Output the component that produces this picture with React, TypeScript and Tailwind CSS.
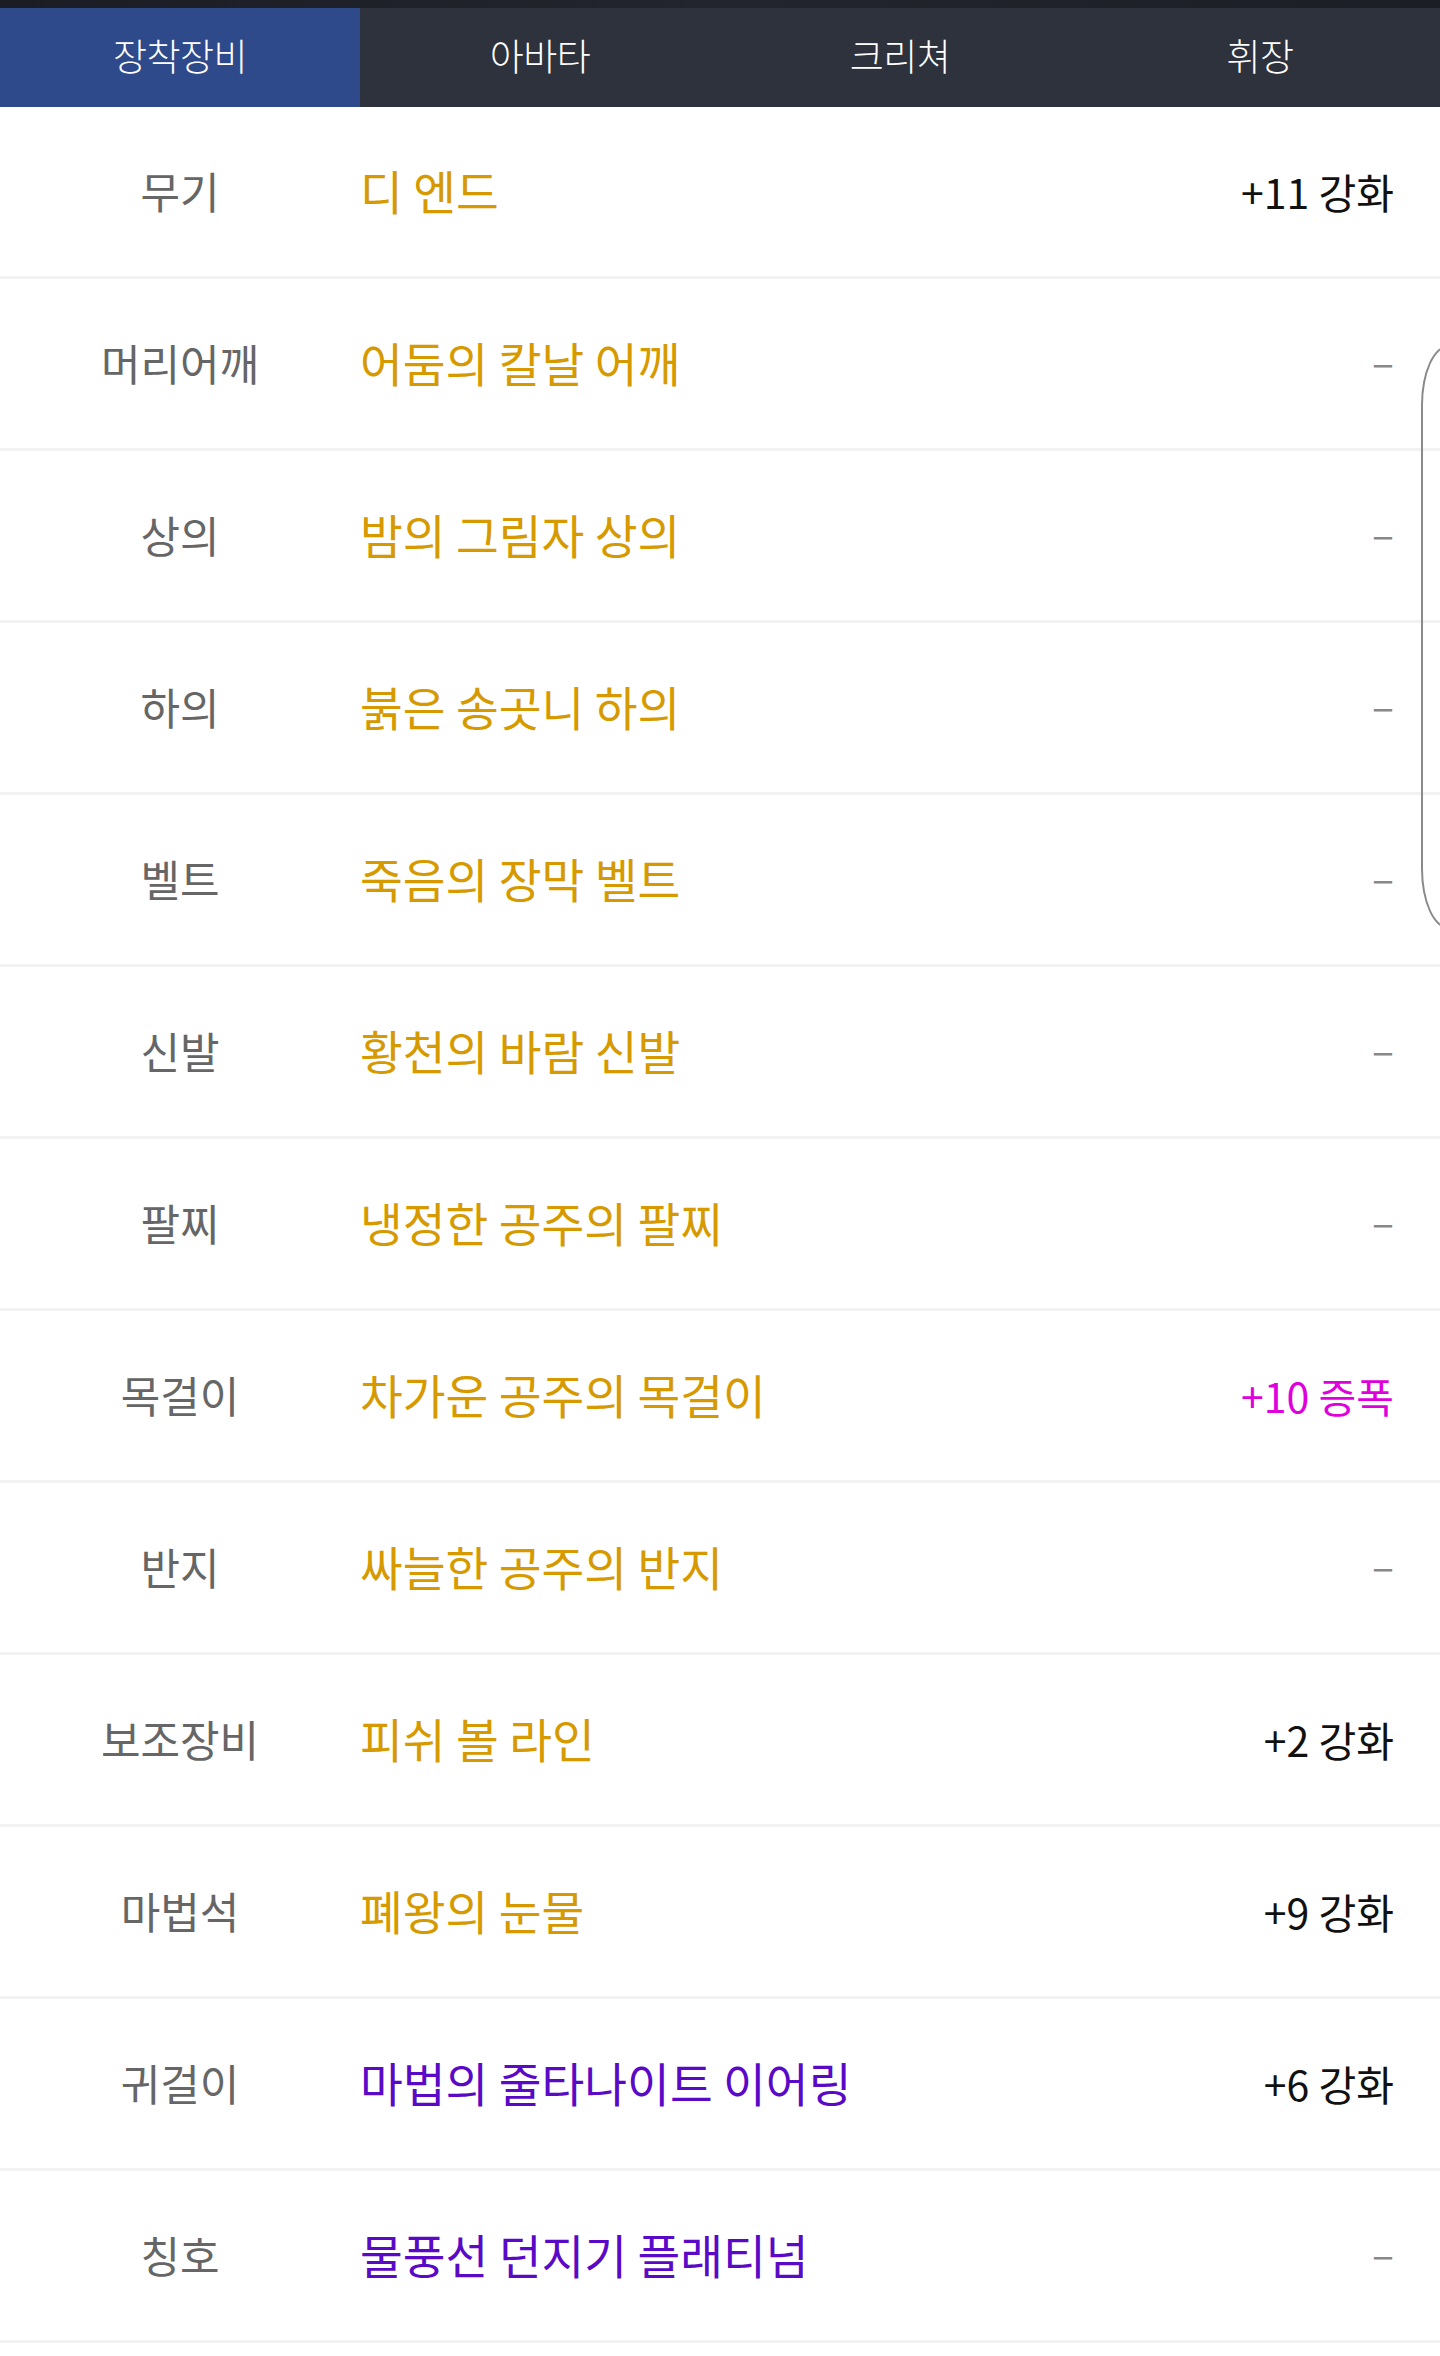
import React from "react";

type Row = { label: string; name: string; nameColor: string; value: string; valueColor: string };

const ORANGE = "text-[#d69a00]";
const PURPLE = "text-[#5a0ac6]";
const DASH = "text-[#888888] pb-[6px]";
const PLAIN = "text-[#111111]";

const rows: Row[] = [
  { label: "무기", name: "디 엔드", nameColor: ORANGE, value: "+11 강화", valueColor: PLAIN },
  { label: "머리어깨", name: "어둠의 칼날 어깨", nameColor: ORANGE, value: "–", valueColor: DASH },
  { label: "상의", name: "밤의 그림자 상의", nameColor: ORANGE, value: "–", valueColor: DASH },
  { label: "하의", name: "붉은 송곳니 하의", nameColor: ORANGE, value: "–", valueColor: DASH },
  { label: "벨트", name: "죽음의 장막 벨트", nameColor: ORANGE, value: "–", valueColor: DASH },
  { label: "신발", name: "황천의 바람 신발", nameColor: ORANGE, value: "–", valueColor: DASH },
  { label: "팔찌", name: "냉정한 공주의 팔찌", nameColor: ORANGE, value: "–", valueColor: DASH },
  { label: "목걸이", name: "차가운 공주의 목걸이", nameColor: ORANGE, value: "+10 증폭", valueColor: "text-[#e000dc]" },
  { label: "반지", name: "싸늘한 공주의 반지", nameColor: ORANGE, value: "–", valueColor: DASH },
  { label: "보조장비", name: "피쉬 볼 라인", nameColor: ORANGE, value: "+2 강화", valueColor: PLAIN },
  { label: "마법석", name: "폐왕의 눈물", nameColor: ORANGE, value: "+9 강화", valueColor: PLAIN },
  { label: "귀걸이", name: "마법의 줄타나이트 이어링", nameColor: PURPLE, value: "+6 강화", valueColor: PLAIN },
  { label: "칭호", name: "물풍선 던지기 플래티넘", nameColor: PURPLE, value: "–", valueColor: DASH },
];

const tabs = ["장착장비", "아바타", "크리쳐", "휘장"];

export default function App() {
  return (
    <div
      className="relative w-[1440px] min-h-[2356px] bg-white overflow-hidden"
      style={{ fontFamily: '"Noto Sans CJK KR", "Noto Sans", sans-serif' }}
    >
      <div className="h-[8px] bg-gradient-to-r from-[#1a1d24] via-[#22252d] to-[#1b1e25]" />
      <div className="grid grid-cols-4 h-[99px] bg-[#2e323d]">
        {tabs.map((t, i) => (
          <div
            key={t}
            className={`flex items-center justify-center pb-[4px] text-[37px] font-light text-white tracking-[-0.5px] ${
              i === 0 ? "bg-[#2e4a8a]" : ""
            }`}
          >
            {t}
          </div>
        ))}
      </div>
      <div className="flex flex-col">
        {rows.map((r) => (
          <div key={r.label} className="flex items-center h-[172px] border-b-[3px] border-[#f2f2f2]">
            <div className="w-[360px] shrink-0 pb-[3px] text-center text-[43px] text-[#666666]">{r.label}</div>
            <div className={`flex-1 pb-[3px] text-[46.5px] ${r.nameColor}`}>{r.name}</div>
            <div className={`pr-[46px] text-[41px] ${r.valueColor}`}>{r.value}</div>
          </div>
        ))}
      </div>
      <div className="absolute left-[1421px] top-[345px] w-[80px] h-[584px] border-2 border-[#8a8a8a] rounded-tl-[28px_60px] rounded-bl-[28px_60px]" />
    </div>
  );
}
